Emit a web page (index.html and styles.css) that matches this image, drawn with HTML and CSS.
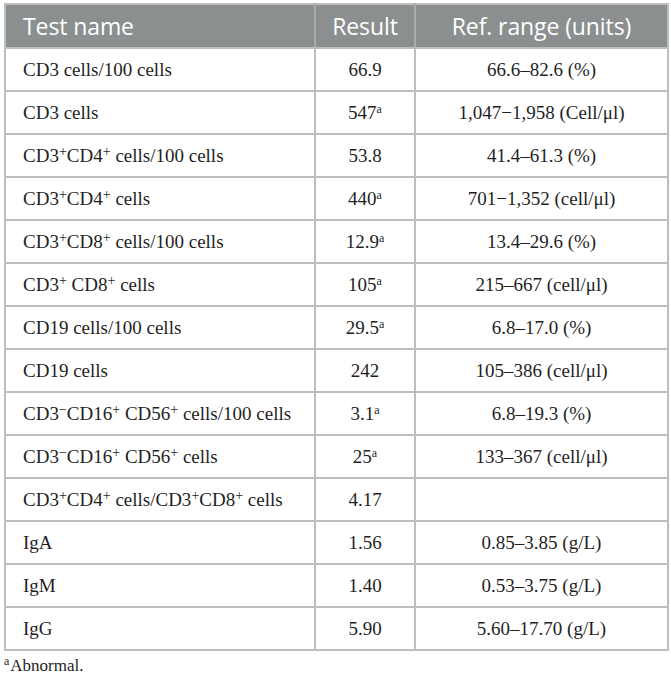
FILE: index.html
```html
<!DOCTYPE html>
<html>
<head>
<meta charset="utf-8">
<link rel="stylesheet" href="styles.css">
</head>
<body>
<div class="wrap">
<table class="lab">
<colgroup><col class="c1"><col class="c2"><col class="c3"></colgroup>
<thead>
<tr><th class="name">Test name</th><th>Result</th><th>Ref. range (units)</th></tr>
</thead>
<tbody>
<tr><td class="name">CD3 cells/100 cells</td><td>66.9</td><td>66.6–82.6 (%)</td></tr>
<tr><td class="name">CD3 cells</td><td>547<sup class="a">a</sup></td><td>1,047−1,958 (Cell/μl)</td></tr>
<tr><td class="name">CD3<sup>+</sup>CD4<sup>+</sup> cells/100 cells</td><td>53.8</td><td>41.4–61.3 (%)</td></tr>
<tr><td class="name">CD3<sup>+</sup>CD4<sup>+</sup> cells</td><td>440<sup class="a">a</sup></td><td>701−1,352 (cell/μl)</td></tr>
<tr><td class="name">CD3<sup>+</sup>CD8<sup>+</sup> cells/100 cells</td><td>12.9<sup class="a">a</sup></td><td>13.4–29.6 (%)</td></tr>
<tr><td class="name">CD3<sup>+</sup> CD8<sup>+</sup> cells</td><td>105<sup class="a">a</sup></td><td>215–667 (cell/μl)</td></tr>
<tr><td class="name">CD19 cells/100 cells</td><td>29.5<sup class="a">a</sup></td><td>6.8–17.0 (%)</td></tr>
<tr><td class="name">CD19 cells</td><td>242</td><td>105–386 (cell/μl)</td></tr>
<tr><td class="name">CD3<sup>−</sup>CD16<sup>+</sup> CD56<sup>+</sup> cells/100 cells</td><td>3.1<sup class="a">a</sup></td><td>6.8–19.3 (%)</td></tr>
<tr><td class="name">CD3<sup>−</sup>CD16<sup>+</sup> CD56<sup>+</sup> cells</td><td>25<sup class="a">a</sup></td><td>133–367 (cell/μl)</td></tr>
<tr><td class="name">CD3<sup>+</sup>CD4<sup>+</sup> cells/CD3<sup>+</sup>CD8<sup>+</sup> cells</td><td>4.17</td><td></td></tr>
<tr><td class="name">IgA</td><td>1.56</td><td>0.85–3.85 (g/L)</td></tr>
<tr><td class="name">IgM</td><td>1.40</td><td>0.53–3.75 (g/L)</td></tr>
<tr><td class="name">IgG</td><td>5.90</td><td>5.60–17.70 (g/L)</td></tr>
</tbody>
</table>
<p class="note"><sup class="fa">a</sup>Abnormal.</p>
</div>
</body>
</html>
```
FILE: styles.css
```css
html, body {
  margin: 0;
  padding: 0;
  background: #fff;
}
.wrap {
  padding: 3px 4px 0 4px;
}
.lab {
  width: 663px;
  border-collapse: collapse;
  table-layout: fixed;
  font-family: "Liberation Serif", "Times New Roman", serif;
  font-size: 19px;
  color: #1f1f1f;
  border: 2px solid #bcbfbd;
}
.c1 { width: 310px; }
.c2 { width: 100px; }
.c3 { width: 253px; }
.lab th {
  background: #8b8f8f;
  color: #fff;
  font-family: "Open Sans", "Noto Sans", sans-serif;
  font-weight: 400;
  font-size: 23px;
  height: 42px;
  padding: 0 4px;
  text-align: center;
  border-left: 2px solid #a9acab;
  border-bottom: 2px solid #bcbfbd;
  letter-spacing: -0.1px;
}
.lab th:first-child { border-left: none; }
.lab td {
  height: 41px;
  padding: 0 6px;
  text-align: center;
  border: 2px solid #bcbfbd;
}
.lab th.name, .lab td.name {
  text-align: left;
  padding-left: 17px;
}
.lab sup {
  font-size: 14px;
  line-height: 0;
  vertical-align: 6px;
}
.lab sup.a {
  font-size: 12px;
}
.note {
  margin: 6px 0 0 0;
  font-family: "Liberation Serif", "Times New Roman", serif;
  font-size: 17px;
  line-height: 18px;
  color: #1f1f1f;
}
.note .fa {
  font-size: 12px;
  line-height: 0;
  vertical-align: 6px;
  margin-right: 1px;
}
```
